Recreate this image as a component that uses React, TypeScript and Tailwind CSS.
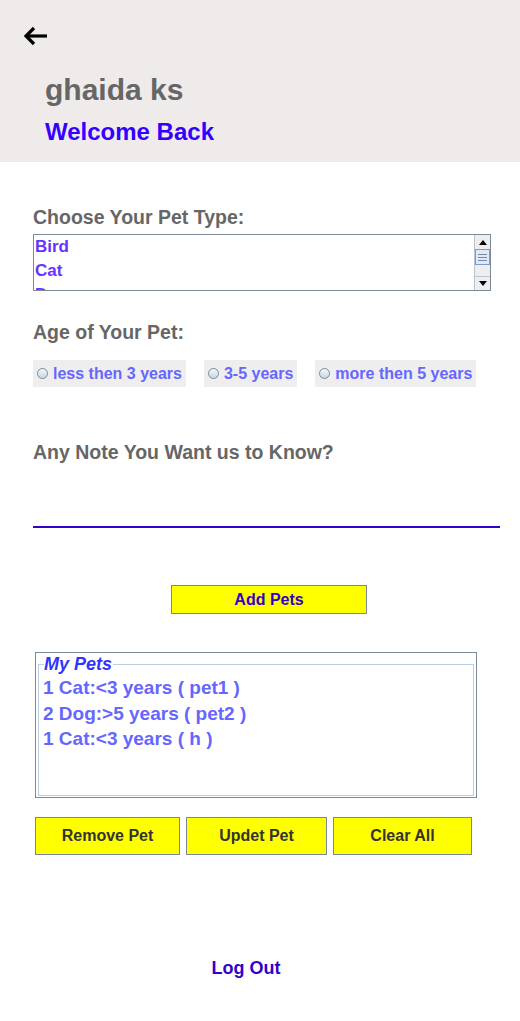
import React from "react";

const font = { fontFamily: '"Liberation Sans", Arial, sans-serif' };

function ArrowLeft() {
  return (
    <svg width="26" height="20" viewBox="0 0 26 20" fill="none">
      <path d="M3 10 H24" stroke="#000" strokeWidth="3.2" />
      <path d="M11 2 L3 10 L11 18" stroke="#000" strokeWidth="3.2" strokeLinejoin="miter" />
    </svg>
  );
}

function Radio({ label }: { label: string }) {
  return (
    <div className="flex h-[27px] items-center gap-[5px] bg-[#eeeeee] pl-[4px] pr-[4px]">
      <span className="h-[11px] w-[11px] rounded-full border border-[#7a8a99] bg-gradient-to-b from-[#f4f7fa] to-[#c9d6e3]" />
      <span className="text-[16px] font-bold text-[#6666ff]">{label}</span>
    </div>
  );
}

function YellowButton({ label, className }: { label: string; className: string }) {
  return (
    <button className={`border border-[#7a8a99] bg-[#ffff00] font-bold ${className}`}>
      {label}
    </button>
  );
}

export default function App() {
  const pets = ["1 Cat:<3 years ( pet1 )", "2 Dog:>5 years ( pet2 )", "1 Cat:<3 years ( h )"];
  return (
    <div className="min-h-[1021px] w-[520px] bg-white" style={font}>
      {/* header */}
      <div className="h-[162px] bg-[#eeebea] pl-[23px] pt-[26px]">
        <ArrowLeft />
        <div className="ml-[22px] mt-[26px] text-[30px] font-bold leading-[36px] text-[#666666]">ghaida ks</div>
        <div className="ml-[22px] mt-[9px] text-[24px] font-bold leading-[30px] text-[#3300ff]">Welcome Back</div>
      </div>

      <div className="px-[33px]">
        {/* pet type */}
        <div className="mt-[43px] text-[19.5px] font-bold leading-[24px] text-[#666666]">Choose Your Pet Type:</div>
        <div className="mt-[5px] flex h-[57px] w-[458px] border border-[#7a8a99]">
          <div className="flex-1 overflow-hidden pl-[1px] text-[17px] font-bold leading-[24px] text-[#6633ff]">
            <div>Bird</div>
            <div>Cat</div>
            <div>Dog</div>
          </div>
          <div className="flex w-[16px] flex-col border-l border-[#b8c4d0] bg-[#eeeeee]">
            <div className="flex h-[14px] items-center justify-center">
              <svg width="8" height="5" viewBox="0 0 8 5"><path d="M0 5 L4 0 L8 5 Z" fill="#000" /></svg>
            </div>
            <div className="flex h-[16px] flex-col items-center justify-center gap-[2px] border border-[#7a9ad0] bg-[#dde8f8]">
              <span className="h-px w-[9px] bg-[#7a8a99]" />
              <span className="h-px w-[9px] bg-[#7a8a99]" />
              <span className="h-px w-[9px] bg-[#7a8a99]" />
            </div>
            <div className="flex-1" />
            <div className="flex h-[14px] items-center justify-center border-t border-[#b8c4d0]">
              <svg width="8" height="5" viewBox="0 0 8 5"><path d="M0 0 L4 5 L8 0 Z" fill="#000" /></svg>
            </div>
          </div>
        </div>

        {/* age */}
        <div className="mt-[29px] text-[19.5px] font-bold leading-[24px] text-[#666666]">Age of Your Pet:</div>
        <div className="mt-[16px] flex gap-[18px]">
          <Radio label="less then 3 years" />
          <Radio label="3-5 years" />
          <Radio label="more then 5 years" />
        </div>

        {/* note */}
        <div className="mt-[53px] text-[19.5px] font-bold leading-[24px] text-[#666666]">Any Note You Want us to Know?</div>
        <div className="mt-[62px] h-[2px] w-[467px] bg-[#3300cc]" />

        {/* add */}
        <div className="mt-[57px] flex">
          <YellowButton label="Add Pets" className="ml-[138px] h-[29px] w-[196px] text-[16px] text-[#3300cc]" />
        </div>

        {/* my pets */}
        <div className="ml-[2px] mt-[38px] h-[146px] w-[442px] border border-[#7a8a99] px-[2px] pb-[1px] pt-[11px]">
          <div className="relative h-full border border-[#b8cfe5] px-[4px] pt-[10px]">
            <span className="absolute left-[5px] top-[-10px] bg-white pr-[1px] text-[18px] font-bold italic leading-[18px] text-[#3333ff]">
              My Pets
            </span>
            {pets.map((p) => (
              <div key={p} className="text-[19px] font-bold leading-[25.5px] text-[#6666ff]">{p}</div>
            ))}
          </div>
        </div>

        {/* actions */}
        <div className="ml-[2px] mt-[19px] flex gap-[6px] text-[#333333]">
          <YellowButton label="Remove Pet" className="h-[38px] w-[145px] text-[16px]" />
          <YellowButton label="Updet Pet" className="h-[38px] w-[141px] text-[16px]" />
          <YellowButton label="Clear All" className="h-[38px] w-[139px] text-[16px]" />
        </div>

        <div className="mt-[102px] text-center text-[18px] font-bold leading-[22px] text-[#3300cc]">
          <span className="ml-[-28px]">Log Out</span>
        </div>
      </div>
    </div>
  );
}
